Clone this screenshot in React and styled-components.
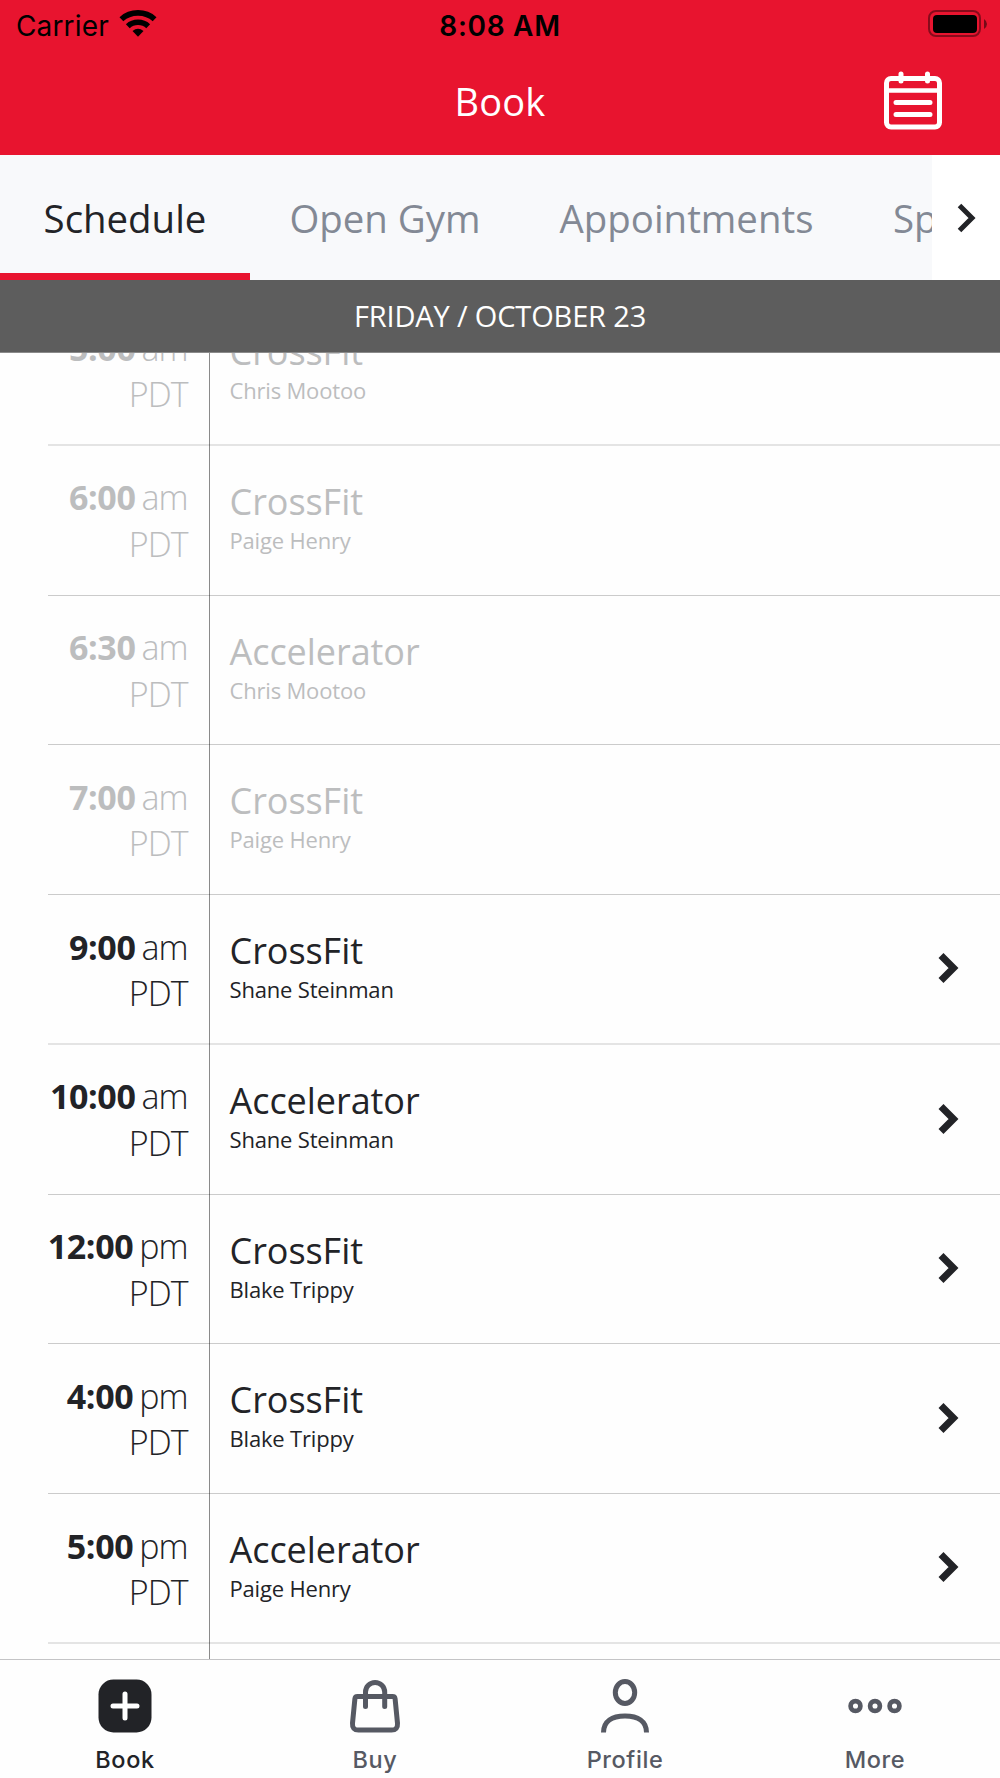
import React from "react";
import styled, { createGlobalStyle } from "styled-components";

const classes = [
  { time: "5:00", period: "am", name: "CrossFit", coach: "Chris Mootoo", past: true, soft: true },
  { time: "6:00", period: "am", name: "CrossFit", coach: "Paige Henry", past: true },
  { time: "6:30", period: "am", name: "Accelerator", coach: "Chris Mootoo", past: true },
  { time: "7:00", period: "am", name: "CrossFit", coach: "Paige Henry", past: true },
  { time: "9:00", period: "am", name: "CrossFit", coach: "Shane Steinman", soft: true },
  { time: "10:00", period: "am", name: "Accelerator", coach: "Shane Steinman" },
  { time: "12:00", period: "pm", name: "CrossFit", coach: "Blake Trippy" },
  { time: "4:00", period: "pm", name: "CrossFit", coach: "Blake Trippy" },
  { time: "5:00", period: "pm", name: "Accelerator", coach: "Paige Henry", soft: true },
];

const GlobalStyle = createGlobalStyle`
  * {
    box-sizing: border-box;
  }

  body {
    margin: 0;
    background: #fefefe;
    font-family: "Open Sans", sans-serif;
    color: #222327;
  }
`;

const Screen = styled.div`
  display: flex;
  flex-direction: column;
  width: 1000px;
  height: 1778px;
  overflow: hidden;
`;

const Header = styled.header`
  flex: none;
  height: 155px;
  background: #e8142f;
`;

const StatusBar = styled.div`
  display: grid;
  grid-template-columns: 1fr auto 1fr;
  align-items: center;
  height: 52px;
  padding: 0 13px;
  font-family: Inter, sans-serif;
  font-size: 28px;
  color: #000;
`;

const Carrier = styled.div`
  display: flex;
  align-items: center;
  gap: 10px;
  padding-left: 3px;
  letter-spacing: 0.15px;

  svg {
    margin-bottom: 4px;
  }
`;

const Clock = styled.div`
  font-size: 28px;
  font-weight: 600;
  letter-spacing: 0.7px;
`;

const Battery = styled.svg`
  justify-self: end;
  margin-bottom: 4px;
`;

const TitleBar = styled.div`
  display: grid;
  grid-template-columns: 1fr auto 1fr;
  align-items: center;
  height: 103px;
  padding: 0 58px;
`;

const Title = styled.h1`
  grid-column: 2;
  margin: 0;
  padding-bottom: 6px;
  font-size: 38px;
  font-weight: 400;
  letter-spacing: 0.2px;
  color: #fff;
`;

const CalendarIcon = styled.svg`
  justify-self: end;
  margin-bottom: 6px;
`;

const TabStrip = styled.nav`
  display: flex;
  flex: none;
  height: 125px;
  background: #f8f9fb;
`;

const Tabs = styled.div`
  display: flex;
  flex: 1;
  min-width: 0;
  overflow: hidden;
`;

const Tab = styled.div`
  display: flex;
  flex: none;
  align-items: center;
  justify-content: center;
  width: ${({ width }) => width}px;
  padding-top: ${({ active }) => (active ? "7px" : "0")};
  border-bottom: ${({ active }) => (active ? "7px solid #e8142f" : "0")};
  font-size: 38.4px;
  color: ${({ active }) => (active ? "#222327" : "#838995")};
`;

const ScrollTabs = styled.div`
  display: flex;
  flex: none;
  align-items: center;
  justify-content: center;
  width: 68px;
  background: #fff;
`;

const DateBar = styled.div`
  display: flex;
  flex: none;
  align-items: center;
  justify-content: center;
  height: 73px;
  padding-bottom: 1px;
  background: #5d5d5d;
  border-bottom: 1px solid #8a8a8a;
  font-size: 29px;
  letter-spacing: -0.15px;
  color: #fff;
`;

const Schedule = styled.main`
  flex: 1;
  min-height: 0;
  overflow: hidden;
  background: linear-gradient(#8a8a8a, #8a8a8a) 209px 0 / 1px 100% no-repeat;
`;

const Rows = styled.div`
  margin-top: -57px;
`;

const Row = styled.div`
  display: flex;
  height: 149.75px;
  margin-left: 48px;
  border-bottom: ${({ soft }) =>
    soft ? "2px solid rgba(0, 0, 0, 0.1)" : "1px solid rgba(0, 0, 0, 0.2)"};
  color: ${({ past }) => (past ? "#bcbdbe" : "#222327")};
`;

const TimeCell = styled.div`
  display: flex;
  flex: none;
  flex-direction: column;
  align-items: flex-end;
  width: 162px;
  padding: 28.5px 22.5px 0 0;
  font-size: 34px;
  font-weight: 300;
  line-height: 46.5px;
  letter-spacing: -1px;
  white-space: nowrap;
`;

const Time = styled.div`
  display: flex;
  gap: 6px;
`;

const Hour = styled.span`
  font-weight: 700;
  letter-spacing: -0.4px;
`;

const ClassCell = styled.div`
  flex: 1;
  padding: 31px 0 0 19.5px;
`;

const ClassName = styled.div`
  font-size: 36px;
  line-height: 49px;
  letter-spacing: -0.05px;
`;

const Coach = styled.div`
  margin-top: -1px;
  font-size: 22px;
  line-height: 30px;
  letter-spacing: -0.18px;
`;

const RowChevron = styled.svg`
  align-self: center;
  margin: 0 41px 1px 0;
`;

const BottomNav = styled.footer`
  display: grid;
  flex: none;
  grid-template-columns: repeat(4, 1fr);
  height: 119px;
  border-top: 1px solid #c4c4c6;
  background: #fefefe;
`;

const NavItem = styled.div`
  display: flex;
  flex-direction: column;
  align-items: center;
  padding-top: 18.5px;
  font-family: Inter, sans-serif;
  font-size: 23.5px;
  font-weight: 500;
  line-height: 30px;
  letter-spacing: 0.6px;
  color: ${({ active }) => (active ? "#222327" : "#565963")};

  svg {
    margin-bottom: 12.5px;
  }
`;

const App = () => {
  return (
    <>
      <GlobalStyle />
      <Screen>
        <Header>
          <StatusBar>
            <Carrier>
              <span>Carrier</span>
              <svg width="38" height="28" viewBox="0 0 38 28">
                <path d="M2.4 9.2C11.5 .8 26.5 .8 35.6 9.2" fill="none" stroke="#000" strokeWidth="5.6" />
                <path d="M8.800 16.2C14.4 11 23.6 11 29.2 16.2" fill="none" stroke="#000" strokeWidth="5.6" />
                <path d="M13.5 21.1Q19 16.400 24.5 21.1L19 26.800Z" />
              </svg>
            </Carrier>
            <Clock>8:08 AM</Clock>
            <Battery width="59" height="28" viewBox="0 0 59 28">
              <rect x="1" y="1" width="51" height="25" rx="7" fill="none" stroke="#000" strokeOpacity="0.42" strokeWidth="2" />
              <rect x="5" y="5" width="44" height="18" rx="4" />
              <path d="M56 9q3 2 3 5t-3 5z" fillOpacity="0.5" />
            </Battery>
          </StatusBar>
          <TitleBar>
            <Title>Book</Title>
            <CalendarIcon width="58" height="59" viewBox="0 0 58 59" fill="none" stroke="#fff" strokeWidth="5" strokeLinecap="round">
              <rect x="2.5" y="7.5" width="53" height="48.5" rx="4.5" />
              <path d="M17 3v7M43.5 3v7" />
              <path d="M3 19.5h52" strokeWidth="4.5" />
              <path d="M12 31.5h34M12 43.5h34" />
            </CalendarIcon>
          </TitleBar>
        </Header>

        <TabStrip>
          <Tabs>
            <Tab width={250} active>Schedule</Tab>
            <Tab width={270}>Open Gym</Tab>
            <Tab width={333}>Appointments</Tab>
            <Tab width={238}>Specialty</Tab>
          </Tabs>
          <ScrollTabs>
            <svg width="20" height="30" viewBox="0 0 20 30">
              <path d="M3.5 2.5L16 15L3.5 27.5" fill="none" stroke="#222327" strokeWidth="5" />
            </svg>
          </ScrollTabs>
        </TabStrip>

        <DateBar>FRIDAY / OCTOBER 23</DateBar>

        <Schedule>
          <Rows>
            {classes.map((item, index) => (
              <Row key={index} past={item.past} soft={item.soft}>
                <TimeCell>
                  <Time>
                    <Hour>{item.time}</Hour>
                    <span>{item.period}</span>
                  </Time>
                  <div>PDT</div>
                </TimeCell>
                <ClassCell>
                  <ClassName>{item.name}</ClassName>
                  <Coach>{item.coach}</Coach>
                </ClassCell>
                {!item.past && (
                  <RowChevron width="22" height="34" viewBox="0 0 22 34">
                    <path d="M4 4.5L16.5 17L4 29.5" fill="none" stroke="#222327" strokeWidth="7" />
                  </RowChevron>
                )}
              </Row>
            ))}
          </Rows>
        </Schedule>

        <BottomNav>
          <NavItem active>
            <svg width="54" height="54" viewBox="0 0 54 54">
              <rect x="0.5" y="0.5" width="53" height="53" rx="15" fill="#222327" />
              <path d="M27 15v24M15 27h24" stroke="#fff" strokeWidth="5" strokeLinecap="round" />
            </svg>
            Book
          </NavItem>
          <NavItem>
            <svg width="54" height="54" viewBox="0 0 54 54" fill="none" stroke="#565963" strokeWidth="5" strokeLinecap="round" strokeLinejoin="round">
              <path d="M9.5 17.5h35q2.3 0 2.6 2.3l2.4 24.5q.5 6.7-6 6.7h-33q-6.5 0-6-6.7l2.4-24.5q.3-2.3 2.6-2.3z" />
              <path d="M17.5 27.5V13a9.6 9.6 0 0 1 19.2 0v14.5" />
            </svg>
            Buy
          </NavItem>
          <NavItem>
            <svg width="54" height="54" viewBox="0 0 54 54" fill="none" stroke="#565963" strokeWidth="5">
              <ellipse cx="27" cy="13.5" rx="9.7" ry="11" />
              <path d="M5.5 53.5C5.5 42 14 37 27 37s21.5 5 21.5 16.5" />
            </svg>
            Profile
          </NavItem>
          <NavItem>
            <svg width="54" height="54" viewBox="0 0 54 54" fill="none" stroke="#565963" strokeWidth="4.7">
              <circle cx="7.5" cy="27" r="4.9" />
              <circle cx="27" cy="27" r="4.9" />
              <circle cx="46.5" cy="27" r="4.9" />
            </svg>
            More
          </NavItem>
        </BottomNav>
      </Screen>
    </>
  );
};

export default App;
